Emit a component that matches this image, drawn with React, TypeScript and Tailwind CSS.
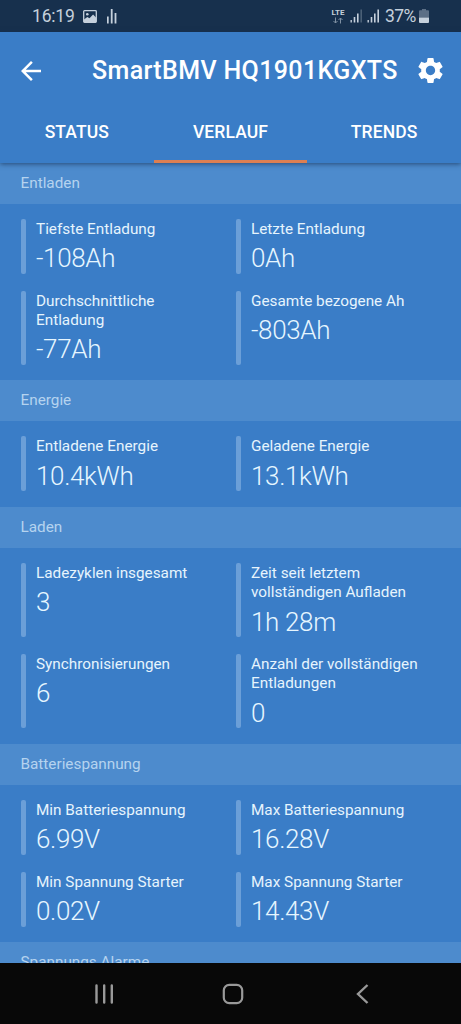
import { MdArrowBack, MdSettings } from "react-icons/md";

type Reading = { label: string; value: string };

type Section = { title: string; readings: Reading[] };

const tabs = ["STATUS", "VERLAUF", "TRENDS"];

const sections: Section[] = [
    {
        title: "Entladen",
        readings: [
            { label: "Tiefste Entladung", value: "-108Ah" },
            { label: "Letzte Entladung", value: "0Ah" },
            { label: "Durchschnittliche Entladung", value: "-77Ah" },
            { label: "Gesamte bezogene Ah", value: "-803Ah" },
        ],
    },
    {
        title: "Energie",
        readings: [
            { label: "Entladene Energie", value: "10.4kWh" },
            { label: "Geladene Energie", value: "13.1kWh" },
        ],
    },
    {
        title: "Laden",
        readings: [
            { label: "Ladezyklen insgesamt", value: "3" },
            { label: "Zeit seit letztem vollständigen Aufladen", value: "1h 28m" },
            { label: "Synchronisierungen", value: "6" },
            { label: "Anzahl der vollständigen Entladungen", value: "0" },
        ],
    },
    {
        title: "Batteriespannung",
        readings: [
            { label: "Min Batteriespannung", value: "6.99V" },
            { label: "Max Batteriespannung", value: "16.28V" },
            { label: "Min Spannung Starter", value: "0.02V" },
            { label: "Max Spannung Starter", value: "14.43V" },
        ],
    },
    { title: "Spannungs Alarme", readings: [] },
];

function SignalIcon({ weak }: { weak?: boolean }) {
    return (
        <svg width="13" height="14" viewBox="0 0 13 14" fill="currentColor">
            <rect x="0.5" y="11" width="1.4" height="2.5" />
            <rect x="3.7" y="8" width="1.6" height="5.5" />
            <rect x="7" y="4.5" width="1.6" height="9" />
            <rect x="10.4" y="0.5" width="1.6" height="13" opacity={weak ? 0.3 : 1} />
        </svg>
    );
}

function StatusBar() {
    return (
        <div className="flex h-8 shrink-0 items-center bg-[#17304d] pl-8 pr-8 text-[#c5d0dc]">
            <span className="w-[43px] text-[17.5px] leading-8 tracking-[-0.2px]">16:19</span>
            <svg className="ml-2" width="14" height="13" viewBox="0 0 14 13" fill="none">
                <rect x="0.7" y="0.7" width="12.6" height="11.6" rx="0.8" stroke="currentColor" strokeWidth="1.3" />
                <circle cx="4.3" cy="4.2" r="1.3" fill="currentColor" />
                <path d="M1 9.5l3.3-2.6 2.2 1.4 3.6-3.7L13 7.5v4.8H1z" fill="currentColor" />
            </svg>
            <svg className="ml-[10px]" width="10" height="16" viewBox="0 0 10 16" fill="currentColor">
                <rect x="0" y="8.5" width="1.7" height="7" />
                <rect x="3.8" y="1" width="1.8" height="14.5" />
                <rect x="7.6" y="5" width="1.8" height="10.5" />
            </svg>

            <div className="ml-auto flex items-center">
                <div className="mr-[5px] flex w-[14px] flex-col items-center">
                    <span className="text-[8px] font-bold leading-[8px]">LTE</span>
                    <svg width="10" height="7" viewBox="0 0 10 7" fill="none" stroke="currentColor" opacity="0.6">
                        <path d="M2.5 0.5v5.5M0.5 4l2 2 2-2M7.5 6.5V1M5.5 3l2-2 2 2" />
                    </svg>
                </div>
                <SignalIcon weak />
                <div className="ml-1 flex">
                    <SignalIcon />
                </div>
                <span className="ml-[5px] w-[32px] whitespace-nowrap text-[17.5px] leading-8 tracking-[-0.6px]">37%</span>
                <svg className="ml-[2px]" width="10" height="14" viewBox="0 0 10 14" fill="currentColor">
                    <path d="M3 0h4v1.3h2q1 0 1 1V8.5H0V2.3q0-1 1-1h2z" opacity="0.4" />
                    <path d="M0 8.5h10V13q0 1-1 1H1q-1 0-1-1z" />
                </svg>
            </div>
        </div>
    );
}

function Header() {
    return (
        <header className="relative z-10 flex h-[130.6px] shrink-0 flex-col bg-[#3a7dc7] text-white shadow-[0_1px_5px_rgba(20,45,80,0.7)]">
            <div className="flex h-[77px] items-center pl-4 pr-[15px]">
                <MdArrowBack size={30} />
                <h1 className="ml-[46px] w-[306px] whitespace-nowrap pt-px text-[25px] font-medium tracking-[0.37px]">
                    SmartBMV HQ1901KGXTS
                </h1>
                <MdSettings className="ml-auto" size={31} />
            </div>
            <nav className="grid flex-1 grid-cols-3">
                {tabs.map((tab) => (
                    <button
                        key={tab}
                        className={
                            tab === "VERLAUF"
                                ? "border-b-3 border-[#dd7f52] pt-1 pb-2 text-[17.5px] font-medium tracking-[0.1px]"
                                : "border-b-3 border-transparent pt-1 pb-2 text-[17.5px] font-medium tracking-[0.1px]"
                        }
                    >
                        {tab}
                    </button>
                ))}
            </nav>
        </header>
    );
}

function ReadingItem({ label, value }: Reading) {
    return (
        <div className="flex gap-[10px]">
            <div className="w-[5px] shrink-0 rounded-[2px] bg-[#6b9fd8]" />
            <div className="min-w-0 pt-px">
                <div className="text-[15.3px] leading-[19.3px] text-[#e6f4fd]">{label}</div>
                <div className="text-[26px] font-light leading-[34.7px] tracking-[-0.35px] text-[#e6f6ff]">
                    <span className="relative top-0.5">{value}</span>
                </div>
            </div>
        </div>
    );
}

function ReadingSection({ title, readings }: Section) {
    return (
        <section>
            <h2 className="flex h-[41px] items-center bg-[#4d8bcd] px-[20.5px] text-[15.3px] text-[#b5d3ef]">{title}</h2>
            <div className="grid grid-cols-[185px_185px] gap-x-[30px] gap-y-[16.7px] px-[21px] py-[15.3px]">
                {readings.map((reading) => (
                    <ReadingItem key={reading.label} {...reading} />
                ))}
            </div>
        </section>
    );
}

function NavigationBar() {
    return (
        <div className="flex h-[61px] shrink-0 items-center bg-[#080808] pl-[94px] text-[#999999]">
            <svg width="20" height="20" viewBox="0 0 20 20" stroke="currentColor" strokeWidth="2.4" strokeLinecap="round">
                <path d="M2.5 1.5v17M10.2 1.5v17M17.8 1.5v17" />
            </svg>
            <svg className="ml-[108px]" width="22" height="22" viewBox="0 0 22 22" fill="none" stroke="currentColor" strokeWidth="2.2">
                <rect x="1.8" y="1.8" width="18.4" height="18.4" rx="5.5" />
            </svg>
            <svg className="ml-[112px]" width="13" height="20" viewBox="0 0 13 20" fill="none" stroke="currentColor" strokeWidth="2.4">
                <path d="M11.5 1L2 10l9.5 9" />
            </svg>
        </div>
    );
}

export default function App() {
    return (
        <div className="flex h-[1024px] w-[461px] flex-col overflow-hidden bg-[#3a7dc7] font-[Roboto,sans-serif]">
            <StatusBar />
            <Header />
            <main className="min-h-0 flex-1 overflow-hidden">
                {sections.map((section) => (
                    <ReadingSection key={section.title} {...section} />
                ))}
            </main>
            <NavigationBar />
        </div>
    );
}
